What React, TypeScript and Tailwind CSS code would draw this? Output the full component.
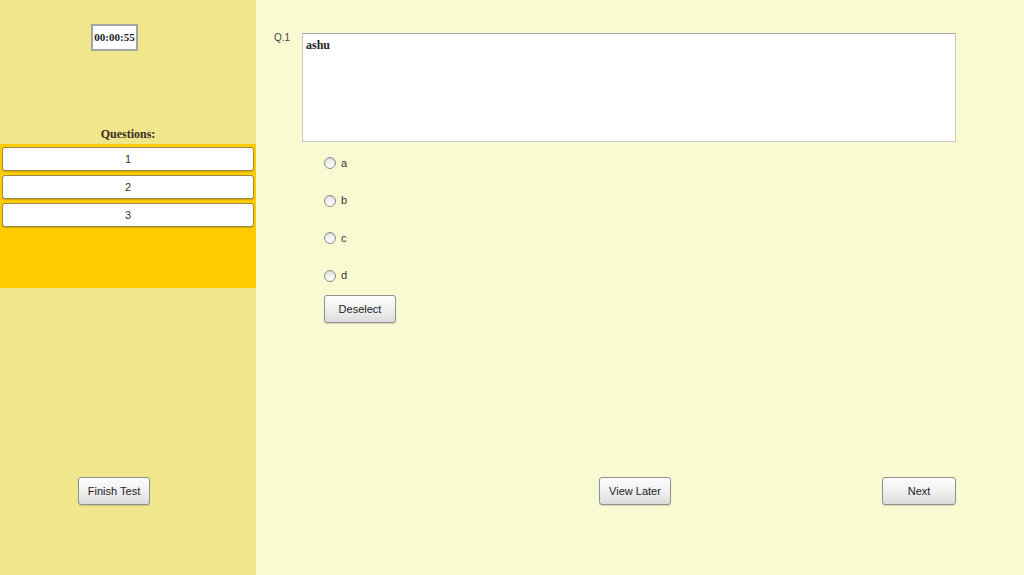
import React from "react";

const BTN =
    "h-[28px] rounded-[3px] border border-[#8e8f8f] bg-gradient-to-b from-[#fdfdfd] via-[#f0f0f0] to-[#dcdcdc] text-[11px] text-[#222] pt-[1px] shadow-[0_1px_1px_rgba(0,0,0,0.15)] font-['Liberation_Sans',sans-serif]";

function Radio({ label }: { label: string }) {
    return (
        <label className="flex items-center gap-[5px] h-[14px]">
            <span className="w-[12px] h-[12px] rounded-full border border-[#8b8b8b] bg-gradient-to-b from-[#e8e8e8] to-[#fdfdfd] shadow-[inset_0_1px_1px_rgba(0,0,0,0.1)]" />
            <span className="text-[11px] text-[#333] font-['Liberation_Sans',sans-serif] leading-none">{label}</span>
        </label>
    );
}

export default function App() {
    const questions = ["1", "2", "3"];
    const options = ["a", "b", "c", "d"];

    return (
        <div className="flex w-[1024px] h-[575px] overflow-hidden">
            {/* sidebar */}
            <aside className="w-[256px] h-full bg-[#f0e68c] flex flex-col">
                <div className="pt-[24px] pl-[91px]">
                    <div className="w-[47px] h-[27px] border-2 border-[#a4a4a4] bg-white flex items-center justify-center">
                        <span className="text-[11px] font-bold text-[#222] font-['Liberation_Serif',serif]">00:00:55</span>
                    </div>
                </div>
                <div className="mt-[75px] text-center text-[12px] font-bold text-[#3a2e20] font-['Liberation_Serif',serif] leading-[16px]">
                    Questions:
                </div>
                <div className="mt-[2px] h-[144px] bg-[#ffcc00] pt-[3px] flex flex-col gap-[4px]">
                    {questions.map((q) => (
                        <button
                            key={q}
                            className="mx-[2px] h-[24px] rounded-[3px] bg-white border border-[#9a8a4a] shadow-[0_1px_1px_rgba(0,0,0,0.2)] text-[11px] text-[#333] font-['Liberation_Sans',sans-serif]"
                        >
                            {q}
                        </button>
                    ))}
                </div>
                <div className="flex-1" />
                <div className="pl-[78px] pb-[70px]">
                    <button className={`${BTN} w-[72px]`}>Finish Test</button>
                </div>
            </aside>

            {/* main */}
            <main className="flex-1 h-full bg-[#fafad2] flex flex-col">
                <div className="flex pt-[33px]">
                    <span className="w-[46px] pl-[18px] text-[10px] leading-[10px] text-[#444] font-['Liberation_Sans',sans-serif]">Q.1</span>
                    <div className="w-[654px] h-[109px] bg-white border border-[#c8c8c8] border-t-[#a8a8a8] px-[3px] pt-[2px] leading-[14px]">
                        <span className="text-[12px] font-bold text-[#222] font-['Liberation_Serif',serif]">ashu</span>
                    </div>
                </div>
                <div className="pl-[68px] pt-[14px] flex flex-col gap-[23.5px]">
                    {options.map((o) => (
                        <Radio key={o} label={o} />
                    ))}
                </div>
                <div className="pl-[68px] pt-[12px]">
                    <button className={`${BTN} w-[72px]`}>Deselect</button>
                </div>
                <div className="flex-1" />
                <div className="flex pb-[70px]">
                    <div className="w-[343px]" />
                    <button className={`${BTN} w-[72px]`}>View Later</button>
                    <div className="w-[211px]" />
                    <button className={`${BTN} w-[74px]`}>Next</button>
                </div>
            </main>
        </div>
    );
}
